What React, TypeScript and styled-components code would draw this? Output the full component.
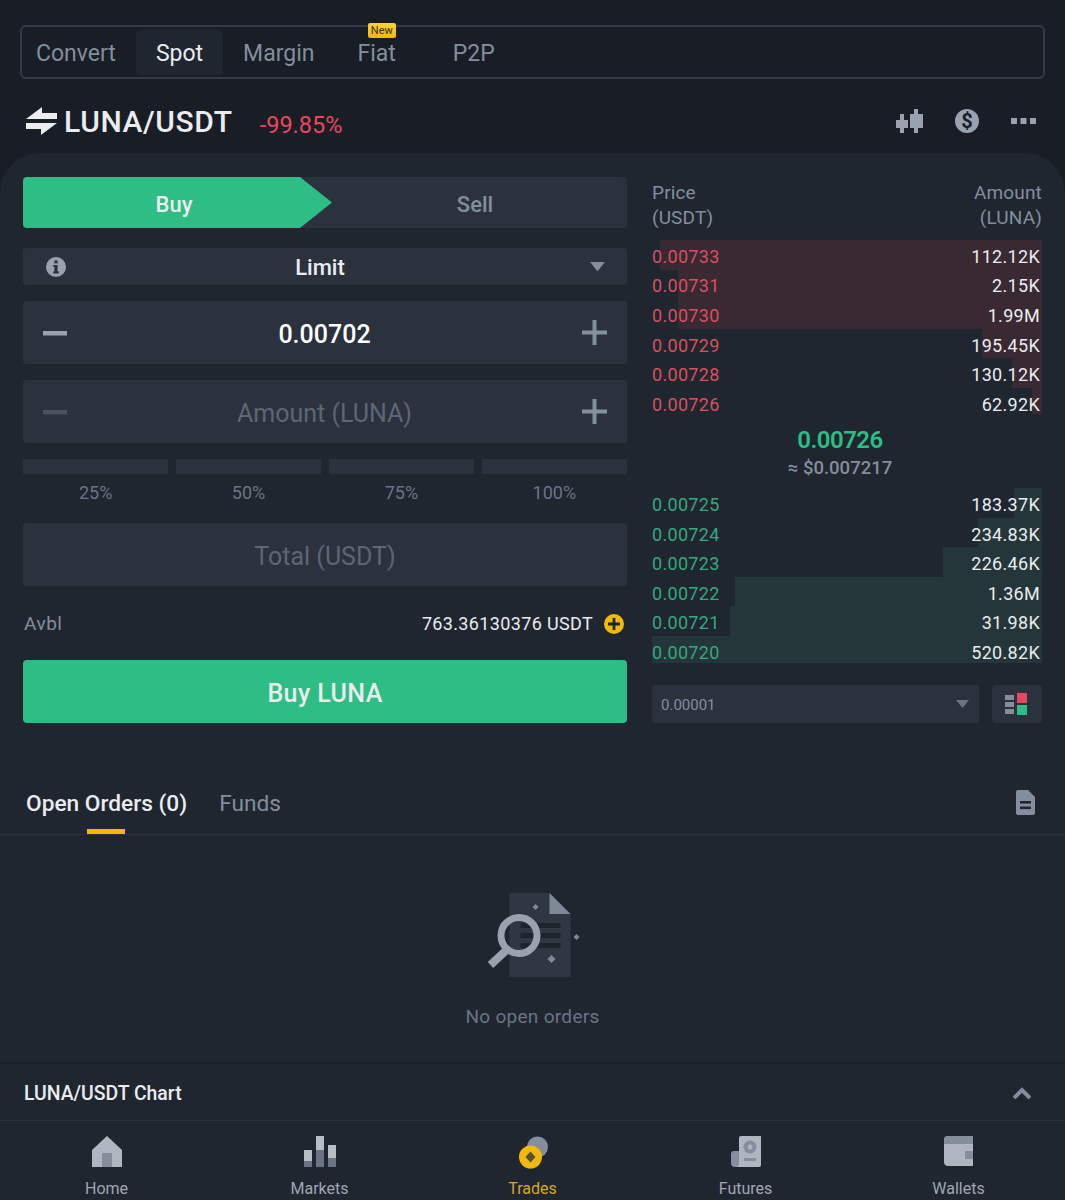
import * as React from 'react'
import styled, { createGlobalStyle } from 'styled-components'

const colors = {
  page: '#181d26',
  panel: '#1f2630',
  field: '#2b323e',
  line: '#2b323e',
  green: '#2ebd85',
  red: '#e8475e',
  muted: '#848e9c',
  dim: '#5e6673',
  text: '#eaecef',
  yellow: '#f0b90b',
}

const GlobalStyle = createGlobalStyle`
  html, body { margin: 0; padding: 0; background: ${colors.page}; }
  body { font-family: Roboto, "Noto Sans", "Liberation Sans", sans-serif; color: ${colors.text}; }
  * { box-sizing: border-box; }
`

const Page = styled.div`
  width: 1065px;
  height: 1200px;
  padding-top: 25px;
  overflow: hidden;
  display: flex;
  flex-direction: column;
`

const TypeBar = styled.div`
  margin: 0 20px;
  height: 54px;
  border: 2px solid #333a45;
  border-radius: 6px;
  display: flex;
  align-items: center;
`

const TypeTab = styled.div<{ $active?: boolean; $left?: number; $right?: number }>`
  position: relative;
  height: 45px;
  display: flex;
  align-items: center;
  padding: 3px ${p => p.$right ?? 20}px 0 ${p => p.$left ?? 20}px;
  font-size: 23px;
  border-radius: 4px;
  color: ${p => (p.$active ? colors.text : colors.muted)};
  background: ${p => (p.$active ? colors.panel : 'transparent')};
`

const NewBadge = styled.span`
  position: absolute;
  top: -7px;
  right: 33px;
  width: 28px;
  height: 15px;
  border-radius: 2px;
  background: linear-gradient(#f8d33a, #f0b90b);
  color: #3a3000;
  font-size: 11px;
  line-height: 15px;
  text-align: center;
`

const PairRow = styled.div`
  height: 74px;
  padding: 10px 29px 0 26px;
  display: flex;
  align-items: center;
`

const PairName = styled.div`
  margin-left: 7px;
  font-size: 30px;
  font-weight: 500;
  letter-spacing: 0.6px;
  color: ${colors.text};
`

const PairChange = styled.div`
  margin-left: 27px;
  padding-top: 7px;
  font-size: 23.5px;
  color: ${colors.red};
`

const PairActions = styled.div`
  margin-left: auto;
  display: flex;
  align-items: center;
  gap: 32px;
`

const CoinIcon = styled.span`
  width: 24px;
  height: 24px;
  border-radius: 50%;
  background: #9aa2af;
  color: ${colors.page};
  font-size: 20px;
  font-weight: 700;
  line-height: 24px;
  text-align: center;
`

const Panel = styled.div`
  flex: 1;
  background: ${colors.panel};
  border-radius: 40px 40px 0 0;
  padding-top: 24px;
  display: flex;
  flex-direction: column;
`

const TradeGrid = styled.div`
  display: flex;
  gap: 25px;
  padding-left: 23px;
`

const FormColumn = styled.div`
  width: 604px;
  display: flex;
  flex-direction: column;
`

const SideSwitch = styled.div`
  height: 51px;
  background: ${colors.field};
  border-radius: 4px;
  display: flex;
  font-size: 22px;
  font-weight: 500;
`

const BuySide = styled.div`
  width: 309px;
  padding: 3px 7px 0 0;
  display: flex;
  align-items: center;
  justify-content: center;
  color: ${colors.text};
  background: ${colors.green};
  border-radius: 4px 0 0 4px;
  clip-path: polygon(0 0, 277px 0, 100% 50%, 277px 100%, 0 100%);
`

const SellSide = styled.div`
  flex: 1;
  padding: 3px 9px 0 0;
  display: flex;
  align-items: center;
  justify-content: center;
  color: ${colors.muted};
`

const LimitSelect = styled.div`
  margin-top: 20px;
  height: 37px;
  padding: 0 22px 0 23px;
  background: ${colors.field};
  border-radius: 4px;
  display: flex;
  align-items: center;
  justify-content: space-between;
`

const LimitLabel = styled.span`
  font-size: 22px;
  font-weight: 500;
  margin-left: -16px;
  padding-top: 2px;
`

const Field = styled.div<{ $muted?: boolean; $top?: number }>`
  margin-top: ${p => p.$top ?? 16}px;
  height: 63px;
  padding: 0 20px;
  background: ${colors.field};
  border-radius: 4px;
  display: flex;
  align-items: center;
  justify-content: space-between;
  font-size: 25px;
  font-weight: ${p => (p.$muted ? 400 : 500)};
  color: ${p => (p.$muted ? colors.dim : '#ffffff')};
`

const FieldValue = styled.span`
  flex: 1;
  padding-top: 3px;
  text-align: center;
`

const Steps = styled.div`
  margin-top: 16px;
  display: grid;
  grid-template-columns: repeat(4, 1fr);
  column-gap: 7.5px;
`

const Step = styled.div`
  display: flex;
  flex-direction: column;
  align-items: center;
  font-size: 18px;
  color: #6b7484;
`

const StepBar = styled.div`
  width: 100%;
  height: 15px;
  margin-bottom: 8px;
  background: ${colors.field};
`

const StepLabel = styled.span`
  height: 41px;
  line-height: 22px;
`

const AvblRow = styled.div`
  height: 74px;
  padding: 1px 3px 0 0;
  display: flex;
  align-items: center;
  font-size: 18px;
`

const AvblLabel = styled.span`
  margin-left: 1px;
  font-size: 19px;
  letter-spacing: 0.5px;
  color: ${colors.muted};
`

const AvblValue = styled.span`
  margin-left: auto;
  margin-right: 11px;
  letter-spacing: 0.35px;
`

const BuyButton = styled.div`
  height: 63px;
  padding-top: 4px;
  background: ${colors.green};
  border-radius: 4px;
  display: flex;
  align-items: center;
  justify-content: center;
  font-size: 25px;
  font-weight: 500;
  letter-spacing: 0.4px;
`

const BookColumn = styled.div`
  width: 390px;
  display: flex;
  flex-direction: column;
`

const BookHead = styled.div`
  height: 63px;
  padding-top: 3px;
  display: flex;
  justify-content: space-between;
  font-size: 19px;
  letter-spacing: 0.15px;
  line-height: 25px;
  color: ${colors.muted};
`

const HeadRight = styled.div`
  text-align: right;
`

const BookList = styled.div<{ $height: number; $offset: number }>`
  height: ${p => p.$height}px;
  overflow: hidden;
  & > div {
    padding-top: ${p => p.$offset}px;
  }
`

const BookRow = styled.div<{ $side: 'ask' | 'bid' }>`
  position: relative;
  height: 29.6px;
  display: flex;
  align-items: center;
  justify-content: space-between;
  padding-right: 2px;
  font-size: 18px;
  letter-spacing: 0.3px;
  color: ${colors.text};
  & > b {
    color: ${p => (p.$side === 'ask' ? '#d9505f' : '#35a97c')};
    font-weight: 400;
    position: relative;
  }
  & > span {
    position: relative;
  }
`

const Depth = styled.i<{ $side: 'ask' | 'bid' }>`
  position: absolute;
  top: 0;
  bottom: 0;
  right: 0;
  background: ${p => (p.$side === 'ask' ? '#3a2932' : '#24363a')};
`

const MidPrice = styled.div`
  height: 74px;
  padding-top: 11px;
  display: flex;
  flex-direction: column;
  align-items: center;
  margin-right: 14px;
`

const MidValue = styled.div`
  font-size: 24px;
  font-weight: 600;
  letter-spacing: -0.5px;
  line-height: 31px;
  color: ${colors.green};
`

const MidFiat = styled.div`
  font-size: 18.5px;
  font-weight: 500;
  line-height: 25px;
  color: ${colors.muted};
`

const BookTools = styled.div`
  margin-top: 22px;
  display: flex;
  gap: 13px;
`

const StepSelect = styled.div`
  flex: 1;
  height: 38px;
  padding: 1px 10px 0 9px;
  background: ${colors.field};
  border-radius: 4px;
  display: flex;
  align-items: center;
  justify-content: space-between;
  font-size: 15px;
  color: ${colors.muted};
`

const ViewButton = styled.div`
  width: 50px;
  height: 38px;
  background: ${colors.field};
  border-radius: 4px;
  display: flex;
  align-items: center;
  justify-content: center;
`

const OrderTabs = styled.div`
  height: 112px;
  padding: 0 30px 0 26px;
  border-bottom: 1px solid ${colors.line};
  display: flex;
  align-items: flex-end;
  gap: 32px;
`

const OrderTab = styled.div<{ $active?: boolean }>`
  position: relative;
  height: 55px;
  padding-top: 10px;
  font-size: 22.7px;
  font-weight: ${p => (p.$active ? 500 : 400)};
  line-height: 30px;
  color: ${p => (p.$active ? colors.text : colors.muted)};
  ${p =>
    p.$active &&
    `&::after {
      content: '';
      position: absolute;
      left: 50%;
      bottom: 0;
      width: 38px;
      height: 5px;
      margin-left: -20px;
      background: ${colors.yellow};
    }`}
`

const OrderDoc = styled.div`
  margin-left: auto;
  align-self: flex-end;
  height: 55px;
  padding-top: 11px;
`

const EmptyState = styled.div`
  height: 227px;
  padding-top: 55px;
  display: flex;
  flex-direction: column;
  align-items: center;
`

const EmptyText = styled.div`
  margin-top: 25px;
  font-size: 19px;
  letter-spacing: 0.3px;
  color: #6b7484;
`

const ChartBar = styled.div`
  height: 59px;
  padding: 2px 34px 0 24px;
  border-top: 2px solid #1a2029;
  border-bottom: 1px solid ${colors.line};
  display: flex;
  align-items: center;
  justify-content: space-between;
  font-size: 19.4px;
  font-weight: 500;
`

const BottomNav = styled.div`
  flex: 1;
  display: grid;
  grid-template-columns: repeat(5, 1fr);
`

const NavItem = styled.div<{ $active?: boolean }>`
  padding-top: 15px;
  display: flex;
  flex-direction: column;
  align-items: center;
  font-size: 16px;
  color: ${p => (p.$active ? '#d8a826' : '#a0a7b3')};
`

const NavIconSlot = styled.div`
  height: 34px;
  margin-bottom: 9px;
`

const SwapIcon = () => (
  <svg width="31" height="28" viewBox="0 0 31 28" fill={colors.text}>
    <path d="M0 12 L16 0 V6 H31 V12 Z" />
    <path d="M31 16 L15 28 V22 H0 V16 Z" />
  </svg>
)

const CandleIcon = () => (
  <svg width="27" height="24" viewBox="0 0 27 24" fill="#9aa2af">
    <path d="M4 5h4v6h4v8H8v5H4v-5H0v-8h4z" />
    <path d="M18 0h4v5h5v14h-5v5h-4v-5h-4V5h4z" />
  </svg>
)

const DotsIcon = () => (
  <svg width="25" height="6" viewBox="0 0 25 6" fill="#9aa2af">
    <rect x="0" width="6" height="6" />
    <rect x="9.5" width="6" height="6" />
    <rect x="19" width="6" height="6" />
  </svg>
)

const InfoIcon = () => (
  <svg width="20" height="20" viewBox="0 0 20 20">
    <circle cx="10" cy="10" r="10" fill="#9aa2af" />
    <rect x="8.4" y="3.4" width="3.2" height="3" fill={colors.field} />
    <path d="M7.2 8h4.4v6.6h1.2v1.8H7.2v-1.8h1.2V9.8H7.2z" fill={colors.field} />
  </svg>
)

const Caret = ({ size = 15, color = '#848e9c' }: { size?: number; color?: string }) => (
  <svg width={size} height={size * 0.62} viewBox="0 0 16 10" fill={color}>
    <path d="M0 0h16L8 10z" />
  </svg>
)

const Minus = ({ color }: { color: string }) => (
  <svg width="24" height="24" viewBox="0 0 24 24" fill={color}>
    <rect x="0" y="10" width="24" height="4.5" />
  </svg>
)

const Plus = () => (
  <svg width="25" height="25" viewBox="0 0 25 25" fill="#848e9c">
    <rect x="0" y="10.5" width="25" height="4" />
    <rect x="10.5" y="0" width="4" height="25" />
  </svg>
)

const TopUpIcon = () => (
  <svg width="20" height="20" viewBox="0 0 20 20">
    <circle cx="10" cy="10" r="10" fill={colors.yellow} />
    <path d="M8.6 4h2.8v4.6H16v2.8h-4.6V16H8.6v-4.6H4V8.6h4.6z" fill={colors.panel} />
  </svg>
)

const BookViewIcon = () => (
  <svg width="24" height="24" viewBox="0 0 24 24">
    <rect x="0" y="3" width="9" height="5" fill="#848e9c" />
    <rect x="0" y="10" width="9" height="5" fill="#848e9c" />
    <rect x="0" y="17" width="9" height="5" fill="#848e9c" />
    <rect x="12" y="1" width="10" height="10" fill={colors.red} />
    <rect x="12" y="13" width="10" height="10" fill={colors.green} />
  </svg>
)

const OrderDocIcon = () => (
  <svg width="19" height="25" viewBox="0 0 19 25">
    <path d="M0 2a2 2 0 0 1 2-2h10l7 7v16a2 2 0 0 1-2 2H2a2 2 0 0 1-2-2z" fill="#848e9c" />
    <rect x="4" y="11" width="11" height="2.6" fill={colors.panel} />
    <rect x="4" y="16.5" width="11" height="2.6" fill={colors.panel} />
  </svg>
)

const EmptyIcon = () => (
  <svg width="100" height="90" viewBox="-2.5 0 100 90">
    <path d="M24 3H64L85 24V87H24Z" fill="#2f3743" />
    <path d="M64 3L85 24H64Z" fill="#7e8897" />
    <rect x="35" y="33" width="40" height="5" fill="#1e242e" />
    <rect x="35" y="43" width="40" height="5" fill="#1e242e" />
    <rect x="35" y="53" width="40" height="5" fill="#1e242e" />
    <circle cx="33.5" cy="45.5" r="18" fill="none" stroke="#9aa2af" strokeWidth="7" />
    <path d="M21 60L5 75" stroke="#9aa2af" strokeWidth="8" />
    <path d="M50 14l3 3-3 3-3-3z M91 44l3 3-3 3-3-3z M66 65l4 4-4 4-4-4z" fill="#7e8897" />
  </svg>
)

const HomeIcon = () => (
  <svg width="30" height="31" viewBox="0 0 30 31">
    <path d="M15 0L30 14V31H0V14Z" fill="#b0b6c1" />
    <rect x="10" y="17" width="10" height="14" fill="#848e9c" />
  </svg>
)

const MarketsIcon = () => (
  <svg width="32" height="31" viewBox="0 0 32 31">
    <rect x="0" y="14" width="8" height="17" fill="#b7bdc6" />
    <rect x="0" y="25" width="8" height="6" fill="#6b7484" />
    <rect x="12" y="0" width="8" height="31" fill="#b7bdc6" />
    <rect x="12" y="14" width="8" height="17" fill="#6b7484" />
    <rect x="24" y="9" width="8" height="22" fill="#b7bdc6" />
    <rect x="24" y="22" width="8" height="9" fill="#6b7484" />
  </svg>
)

const TradesIcon = () => (
  <svg width="30" height="33" viewBox="0 0 30 33">
    <circle cx="19.5" cy="11" r="10.5" fill="#848e9c" />
    <circle cx="12.5" cy="21" r="11.5" fill="#f0b90b" />
    <path d="M12.5 15.5l5 5.5-5 5.5-5-5.5z" fill="#55502e" />
  </svg>
)

const FuturesIcon = () => (
  <svg width="30" height="31" viewBox="0 0 30 31">
    <path d="M0 18a3 3 0 0 1 3-3h6v16H4a4 4 0 0 1-4-4z" fill="#848e9c" />
    <path d="M8 2a2 2 0 0 1 2-2h20v29a2 2 0 0 1-2 2H6c2-1 2-3 2-4z" fill="#b0b6c1" />
    <circle cx="19" cy="11" r="6.5" fill="#848e9c" />
    <circle cx="19" cy="11" r="2.4" fill="#b0b6c1" />
    <rect x="13" y="22" width="12" height="3" fill="#848e9c" />
  </svg>
)

const WalletsIcon = () => (
  <svg width="29" height="30" viewBox="0 0 29 30">
    <path d="M0 4a4 4 0 0 1 4-4h25v30H4a4 4 0 0 1-4-4z" fill="#b0b6c1" />
    <path d="M0 4a4 4 0 0 1 4-4h25v8H0z" fill="#848e9c" />
    <rect x="21" y="15" width="8" height="8" fill="#848e9c" />
  </svg>
)

const asks = [
  { price: '0.00733', amount: '112.12K', width: 382 },
  { price: '0.00731', amount: '2.15K', width: 364 },
  { price: '0.00730', amount: '1.99M', width: 364 },
  { price: '0.00729', amount: '195.45K', width: 60 },
  { price: '0.00728', amount: '130.12K', width: 30 },
  { price: '0.00726', amount: '62.92K', width: 10 },
]

const bids = [
  { price: '0.00725', amount: '183.37K', width: 28 },
  { price: '0.00724', amount: '234.83K', width: 64 },
  { price: '0.00723', amount: '226.46K', width: 99 },
  { price: '0.00722', amount: '1.36M', width: 307 },
  { price: '0.00721', amount: '31.98K', width: 312 },
  { price: '0.00720', amount: '520.82K', width: 392 },
]

const navItems = [
  { label: 'Home', icon: <HomeIcon /> },
  { label: 'Markets', icon: <MarketsIcon /> },
  { label: 'Trades', icon: <TradesIcon />, active: true },
  { label: 'Futures', icon: <FuturesIcon /> },
  { label: 'Wallets', icon: <WalletsIcon /> },
]

export default function App() {
  return (
    <Page>
      <GlobalStyle />
      <TypeBar>
        <TypeTab $left={14}>Convert</TypeTab>
        <TypeTab $active>Spot</TypeTab>
        <TypeTab $right={18}>Margin</TypeTab>
        <TypeTab $left={25} $right={33}>
          Fiat
          <NewBadge>New</NewBadge>
        </TypeTab>
        <TypeTab $left={24}>P2P</TypeTab>
      </TypeBar>
      <PairRow>
        <SwapIcon />
        <PairName>LUNA/USDT</PairName>
        <PairChange>-99.85%</PairChange>
        <PairActions>
          <CandleIcon />
          <CoinIcon>$</CoinIcon>
          <DotsIcon />
        </PairActions>
      </PairRow>
      <Panel>
        <TradeGrid>
          <FormColumn>
            <SideSwitch>
              <BuySide>Buy</BuySide>
              <SellSide>Sell</SellSide>
            </SideSwitch>
            <LimitSelect>
              <InfoIcon />
              <LimitLabel>Limit</LimitLabel>
              <Caret />
            </LimitSelect>
            <Field>
              <Minus color="#9aa2af" />
              <FieldValue>0.00702</FieldValue>
              <Plus />
            </Field>
            <Field $muted>
              <Minus color="#4b5361" />
              <FieldValue>Amount (LUNA)</FieldValue>
              <Plus />
            </Field>
            <Steps>
              {['25%', '50%', '75%', '100%'].map(step => (
                <Step key={step}>
                  <StepBar />
                  <StepLabel>{step}</StepLabel>
                </Step>
              ))}
            </Steps>
            <Field $muted $top={0}>
              <FieldValue>Total (USDT)</FieldValue>
            </Field>
            <AvblRow>
              <AvblLabel>Avbl</AvblLabel>
              <AvblValue>763.36130376 USDT</AvblValue>
              <TopUpIcon />
            </AvblRow>
            <BuyButton>Buy LUNA</BuyButton>
          </FormColumn>
          <BookColumn>
            <BookHead>
              <div>
                Price
                <br />
                (USDT)
              </div>
              <HeadRight>
                Amount
                <br />
                (LUNA)
              </HeadRight>
            </BookHead>
            <BookList $height={174} $offset={3}>
              {asks.map(row => (
                <BookRow key={row.price} $side="ask">
                  <Depth $side="ask" style={{ width: row.width }} />
                  <b>{row.price}</b>
                  <span>{row.amount}</span>
                </BookRow>
              ))}
            </BookList>
            <MidPrice>
              <MidValue>0.00726</MidValue>
              <MidFiat>≈ $0.007217</MidFiat>
            </MidPrice>
            <BookList $height={175} $offset={3.5}>
              {bids.map(row => (
                <BookRow key={row.price} $side="bid">
                  <Depth $side="bid" style={{ width: row.width }} />
                  <b>{row.price}</b>
                  <span>{row.amount}</span>
                </BookRow>
              ))}
            </BookList>
            <BookTools>
              <StepSelect>
                0.00001
                <Caret size={13} color="#6b7484" />
              </StepSelect>
              <ViewButton>
                <BookViewIcon />
              </ViewButton>
            </BookTools>
          </BookColumn>
        </TradeGrid>
        <OrderTabs>
          <OrderTab $active>Open Orders (0)</OrderTab>
          <OrderTab>Funds</OrderTab>
          <OrderDoc>
            <OrderDocIcon />
          </OrderDoc>
        </OrderTabs>
        <EmptyState>
          <EmptyIcon />
          <EmptyText>No open orders</EmptyText>
        </EmptyState>
        <ChartBar>
          LUNA/USDT Chart
          <svg width="18" height="12" viewBox="0 0 18 12" fill="none" stroke="#848e9c" strokeWidth="4">
            <path d="M1 11L9 3L17 11" />
          </svg>
        </ChartBar>
        <BottomNav>
          {navItems.map(item => (
            <NavItem key={item.label} $active={item.active}>
              <NavIconSlot>{item.icon}</NavIconSlot>
              {item.label}
            </NavItem>
          ))}
        </BottomNav>
      </Panel>
    </Page>
  )
}
